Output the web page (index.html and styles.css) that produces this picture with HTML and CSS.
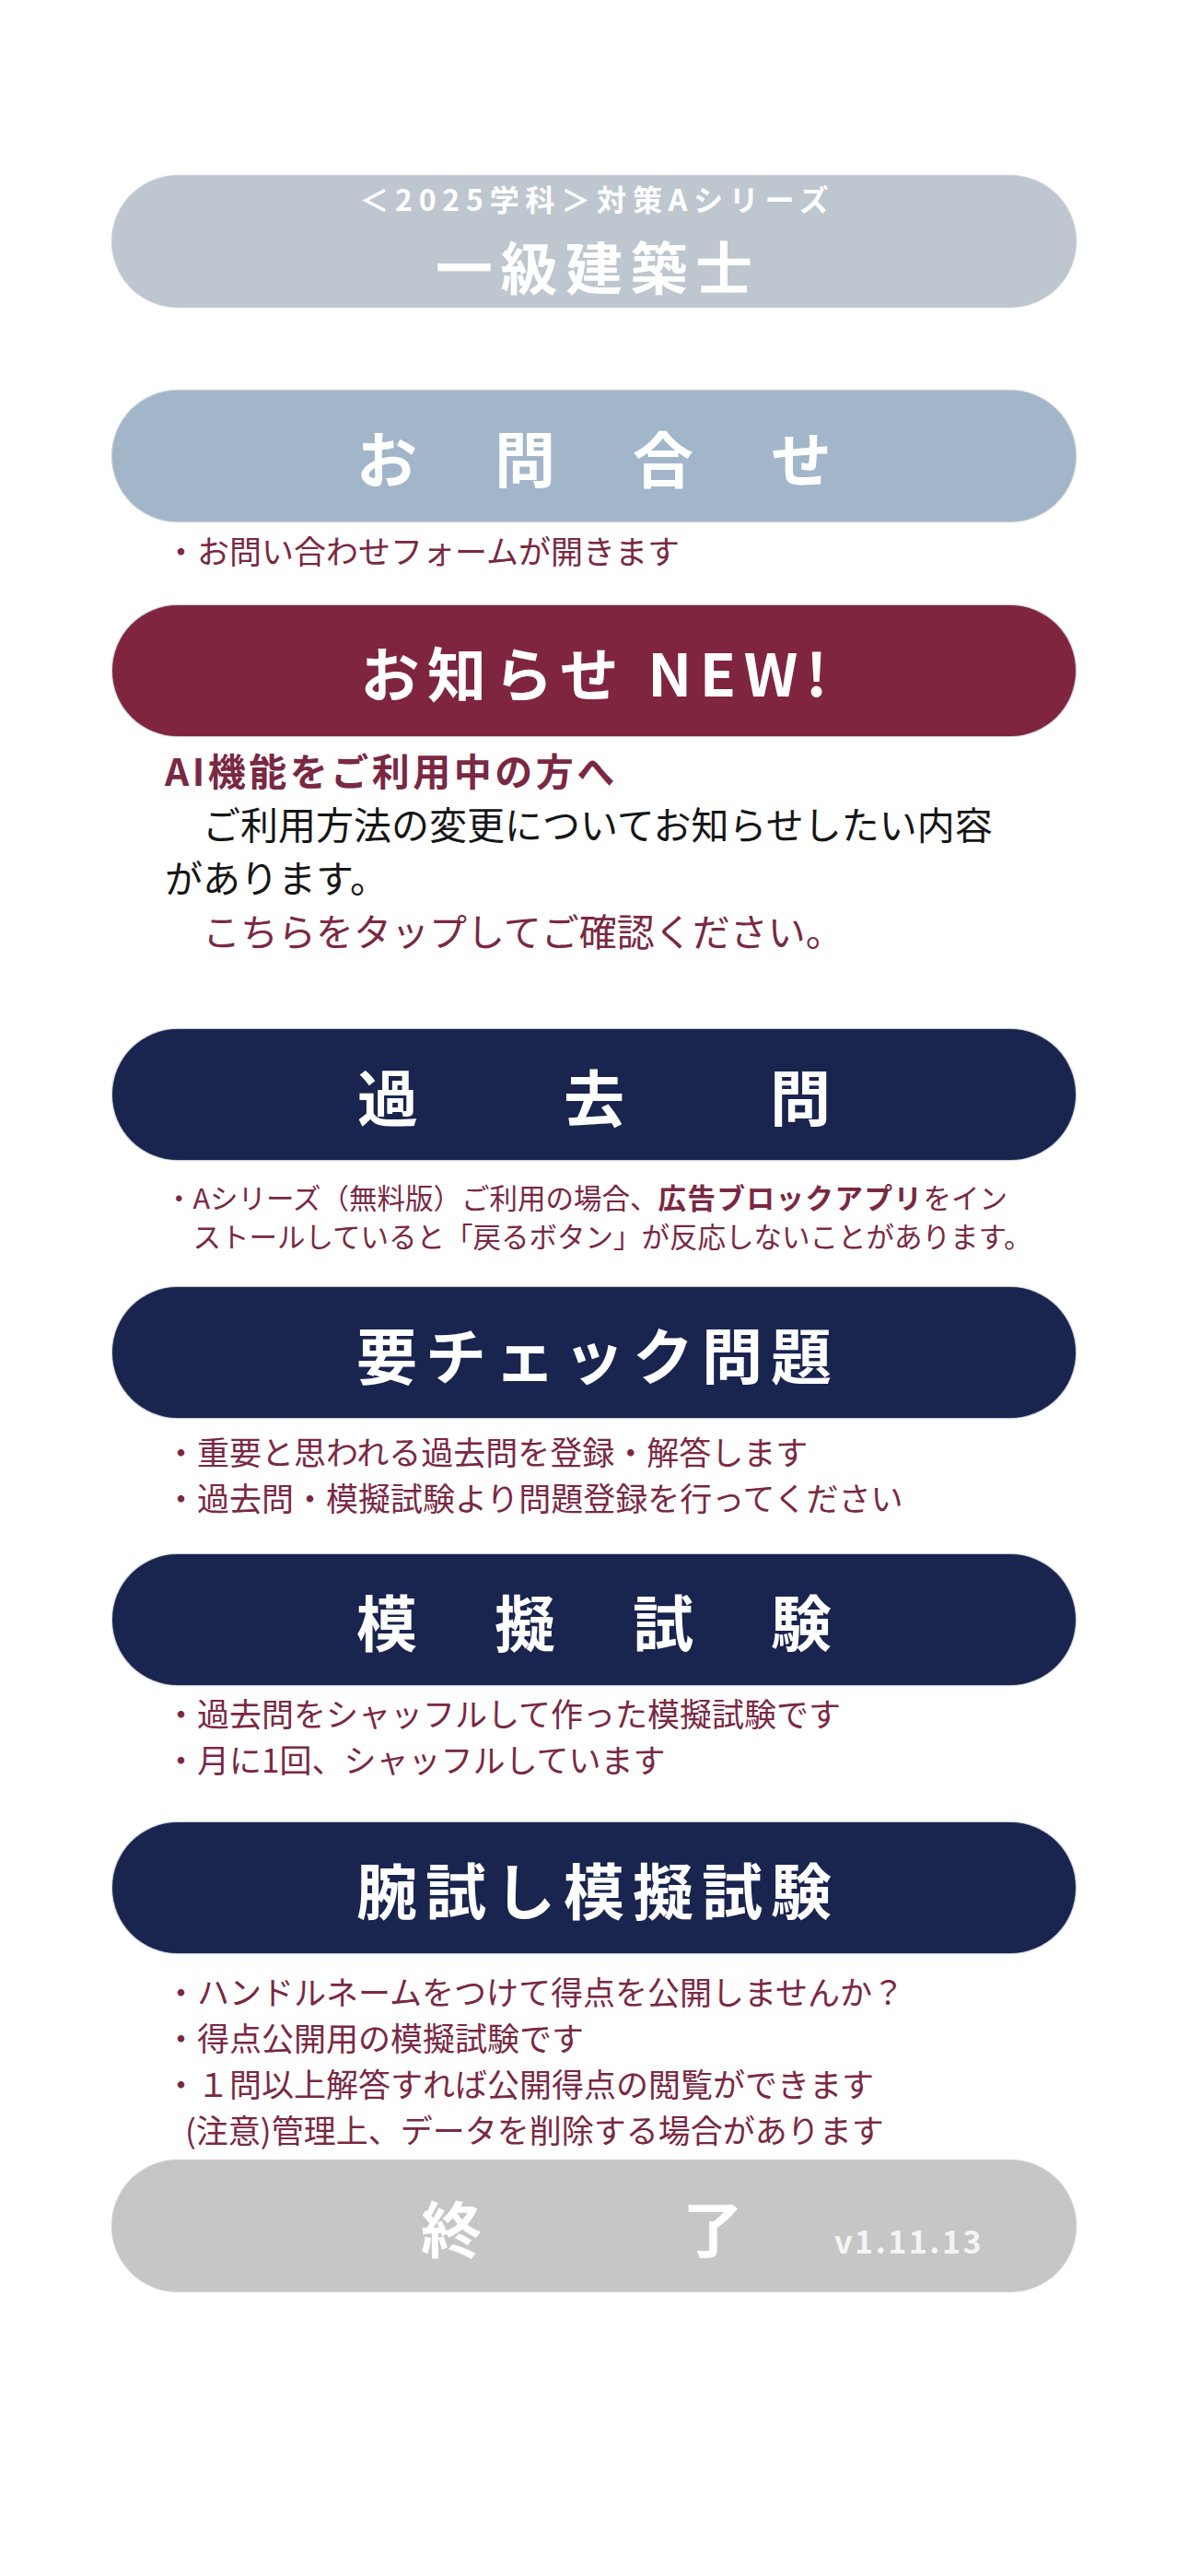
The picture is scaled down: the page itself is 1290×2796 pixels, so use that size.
FILE: index.html
```html
<!DOCTYPE html>
<html lang="ja">
<head>
<meta charset="utf-8">
<title>一級建築士</title>
<link rel="stylesheet" href="styles.css">
</head>
<body>
<main class="menu">
  <div class="btn btn-title">
    <span class="title-sub">＜2025学科＞対策Aシリーズ</span>
    <span class="title-main">一級建築士</span>
  </div>

  <div class="btn btn-contact"><span class="label label-wide">お問合せ</span></div>
  <p class="note note-contact">・お問い合わせフォームが開きます</p>

  <div class="btn btn-news"><span class="label label-news">お知らせ NEW!</span></div>
  <div class="notice">
    <p class="notice-head">AI機能をご利用中の方へ</p>
    <p class="notice-body">ご利用方法の変更についてお知らせしたい内容<br><span class="no-indent">があります。</span></p>
    <p class="notice-link">こちらをタップしてご確認ください。</p>
  </div>

  <div class="btn btn-navy"><span class="label label-xwide">過去問</span></div>
  <p class="note note-small">・Aシリーズ（無料版）ご利用の場合、<b>広告ブロックアプリ</b>をイン<br>ストールしていると「戻るボタン」が反応しないことがあります。</p>

  <div class="btn btn-navy"><span class="label label-tight">要チェック問題</span></div>
  <p class="note note-check">・重要と思われる過去問を登録・解答します<br>・過去問・模擬試験より問題登録を行ってください</p>

  <div class="btn btn-navy"><span class="label label-wide">模擬試験</span></div>
  <p class="note note-mock">・過去問をシャッフルして作った模擬試験です<br>・月に1回、シャッフルしています</p>

  <div class="btn btn-navy"><span class="label label-tight">腕試し模擬試験</span></div>
  <p class="note note-trial">・ハンドルネームをつけて得点を公開しませんか？<br>・得点公開用の模擬試験です<br>・１問以上解答すれば公開得点の閲覧ができます<br><span class="caution">(注意)管理上、データを削除する場合があります</span></p>

  <div class="btn btn-exit"><span class="label label-exit">終了</span><span class="version">v1.11.13</span></div>
</main>
</body>
</html>
```
FILE: styles.css
```css
* {
  box-sizing: border-box;
}

html, body {
  margin: 0;
  padding: 0;
  background: #ffffff;
}

body {
  font-family: "Noto Sans CJK JP", "Noto Sans", sans-serif;
  width: 1290px;
  min-height: 2796px;
}

.menu {
  width: 1046px;
  margin: 0 auto;
  padding-top: 191px;
  display: flex;
  flex-direction: column;
}

.btn {
  position: relative;
  height: 142px;
  border-radius: 71px;
  display: flex;
  align-items: center;
  justify-content: center;
  color: #ffffff;
  font-weight: 700;
  box-shadow: 0 0 0 1px rgba(170, 175, 195, 0.55), 0 0 3px rgba(0, 0, 0, 0.18);
}

.btn-title {
  background: #bec6cf;
  flex-direction: column;
  justify-content: flex-start;
  padding-top: 4px;
}

.title-sub {
  font-size: 32px;
  line-height: 40px;
  letter-spacing: 6.8px;
  padding-left: 6.8px;
}

.title-main {
  font-size: 62px;
  line-height: 62px;
  letter-spacing: 8.5px;
  padding-left: 8.5px;
  margin-top: 22px;
}

.btn-contact {
  background: #a2b6ca;
  margin-top: 91px;
}

.btn-news {
  background: #80253f;
  margin-top: 36px;
}

.btn-navy {
  background: #19254f;
}

.btn-exit {
  background: #c6c6c6;
  margin-top: 9px;
}

.label {
  font-size: 66px;
  line-height: 66px;
  white-space: nowrap;
}

.label-wide {
  letter-spacing: 84px;
  padding-left: 84px;
}

.label-xwide {
  letter-spacing: 158px;
  padding-left: 158px;
}

.label-tight {
  letter-spacing: 9px;
  padding-left: 9px;
}

.label-news {
  font-size: 64px;
  letter-spacing: 8.5px;
  padding-left: 8.5px;
}

.label-exit {
  letter-spacing: 218px;
  padding-left: 192px;
}

.version {
  position: absolute;
  right: 100px;
  top: 70px;
  font-size: 34px;
  line-height: 34px;
  font-weight: 700;
  letter-spacing: 2.5px;
  color: #f4f4f4;
}

.note {
  margin: 0;
  padding-left: 57px;
  color: #7a2843;
  white-space: nowrap;
  font-size: 35px;
  line-height: 50px;
}

.note b {
  font-weight: 700;
  letter-spacing: 1.5px;
}

.note-contact {
  line-height: 48px;
  margin-top: 7px;
}

.note-small {
  font-size: 30.5px;
  line-height: 42px;
  padding-left: calc(57px + 1em);
  text-indent: -1em;
  margin-top: 19px;
  margin-bottom: 35px;
}

.note-check {
  margin-top: 11px;
  margin-bottom: 37px;
}

.note-mock {
  margin-top: 5px;
  margin-bottom: 44px;
}

.note-trial {
  margin-top: 16px;
}

.caution {
  padding-left: 22px;
}

.notice {
  margin-top: 7px;
  margin-bottom: 79px;
  padding-left: 57px;
  font-size: 41px;
  line-height: 58px;
  white-space: nowrap;
}

.notice p {
  margin: 0;
}

.notice-head {
  color: #7a2843;
  font-weight: 700;
  letter-spacing: 3.5px;
}

.notice-body {
  color: #161616;
  text-indent: 1em;
}

.no-indent {
  display: inline-block;
  margin-left: -1em;
}

.notice-link {
  color: #7a2843;
  text-indent: 1em;
}
```
